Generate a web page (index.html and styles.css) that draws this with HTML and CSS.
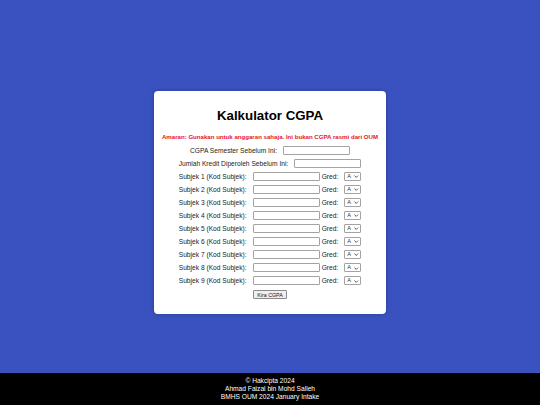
FILE: index.html
```html
<!DOCTYPE html>
<html lang="ms">
<head>
<meta charset="utf-8">
<title>Kalkulator CGPA</title>
<link rel="stylesheet" href="styles.css">
</head>
<body>
<main class="stage">
  <section class="card">
    <h1 class="title">Kalkulator CGPA</h1>
    <p class="warning">Amaran: Gunakan untuk anggaran sahaja. Ini bukan CGPA rasmi dari OUM</p>
    <form class="form">
      <div class="row"><label class="lbl">CGPA Semester Sebelum Ini:</label><input class="txt" type="text"></div>
      <div class="row"><label class="lbl">Jumlah Kredit Diperoleh Sebelum Ini:</label><input class="txt" type="text"></div>
      <div class="row"><label class="lbl">Subjek 1 (Kod Subjek):</label><input class="txt" type="text"><label class="gred">Gred:</label><span class="selwrap"><select class="sel"><option>A</option></select><svg class="chev" viewBox="0 0 6 4"><path d="M0.6 0.8 L3 3.2 L5.4 0.8" fill="none" stroke="#333" stroke-width="1.1"/></svg></span></div>
      <div class="row"><label class="lbl">Subjek 2 (Kod Subjek):</label><input class="txt" type="text"><label class="gred">Gred:</label><span class="selwrap"><select class="sel"><option>A</option></select><svg class="chev" viewBox="0 0 6 4"><path d="M0.6 0.8 L3 3.2 L5.4 0.8" fill="none" stroke="#333" stroke-width="1.1"/></svg></span></div>
      <div class="row"><label class="lbl">Subjek 3 (Kod Subjek):</label><input class="txt" type="text"><label class="gred">Gred:</label><span class="selwrap"><select class="sel"><option>A</option></select><svg class="chev" viewBox="0 0 6 4"><path d="M0.6 0.8 L3 3.2 L5.4 0.8" fill="none" stroke="#333" stroke-width="1.1"/></svg></span></div>
      <div class="row"><label class="lbl">Subjek 4 (Kod Subjek):</label><input class="txt" type="text"><label class="gred">Gred:</label><span class="selwrap"><select class="sel"><option>A</option></select><svg class="chev" viewBox="0 0 6 4"><path d="M0.6 0.8 L3 3.2 L5.4 0.8" fill="none" stroke="#333" stroke-width="1.1"/></svg></span></div>
      <div class="row"><label class="lbl">Subjek 5 (Kod Subjek):</label><input class="txt" type="text"><label class="gred">Gred:</label><span class="selwrap"><select class="sel"><option>A</option></select><svg class="chev" viewBox="0 0 6 4"><path d="M0.6 0.8 L3 3.2 L5.4 0.8" fill="none" stroke="#333" stroke-width="1.1"/></svg></span></div>
      <div class="row"><label class="lbl">Subjek 6 (Kod Subjek):</label><input class="txt" type="text"><label class="gred">Gred:</label><span class="selwrap"><select class="sel"><option>A</option></select><svg class="chev" viewBox="0 0 6 4"><path d="M0.6 0.8 L3 3.2 L5.4 0.8" fill="none" stroke="#333" stroke-width="1.1"/></svg></span></div>
      <div class="row"><label class="lbl">Subjek 7 (Kod Subjek):</label><input class="txt" type="text"><label class="gred">Gred:</label><span class="selwrap"><select class="sel"><option>A</option></select><svg class="chev" viewBox="0 0 6 4"><path d="M0.6 0.8 L3 3.2 L5.4 0.8" fill="none" stroke="#333" stroke-width="1.1"/></svg></span></div>
      <div class="row"><label class="lbl">Subjek 8 (Kod Subjek):</label><input class="txt" type="text"><label class="gred">Gred:</label><span class="selwrap"><select class="sel"><option>A</option></select><svg class="chev" viewBox="0 0 6 4"><path d="M0.6 0.8 L3 3.2 L5.4 0.8" fill="none" stroke="#333" stroke-width="1.1"/></svg></span></div>
      <div class="row"><label class="lbl">Subjek 9 (Kod Subjek):</label><input class="txt" type="text"><label class="gred">Gred:</label><span class="selwrap"><select class="sel"><option>A</option></select><svg class="chev" viewBox="0 0 6 4"><path d="M0.6 0.8 L3 3.2 L5.4 0.8" fill="none" stroke="#333" stroke-width="1.1"/></svg></span></div>
      <div class="row btnrow"><button class="btn" type="button">Kira CGPA</button></div>
    </form>
  </section>
</main>
<footer class="footer">
  <div>© Hakcipta 2024</div>
  <div>Ahmad Faizal bin Mohd Salleh</div>
  <div>BMHS OUM 2024 January Intake</div>
</footer>
</body>
</html>
```
FILE: styles.css
```css
html, body {
  margin: 0;
  padding: 0;
}
body {
  background: #3a52c0;
  font-family: "Liberation Sans", Arial, sans-serif;
  font-size: 6.65px;
  color: #000;
  height: 405px;
}
.stage {
  height: 405px;
  display: flex;
  align-items: center;
  justify-content: center;
}
.card {
  width: 232px;
  height: 223px;
  box-sizing: border-box;
  background: #fff;
  border-radius: 4px;
  box-shadow: 0 0 4px rgba(0, 0, 0, 0.25);
  padding: 17px 0 0;
  text-align: center;
}
.title {
  margin: 0;
  font-size: 13.3px;
  font-weight: bold;
  line-height: 15.3px;
}
.warning {
  margin: 9.5px 0 0;
  color: #e8141c;
  font-weight: bold;
  line-height: 7.6px;
  white-space: nowrap;
  font-size: 6.1px;
}
.form {
  margin-top: 5.5px;
  display: flex;
  flex-direction: column;
  gap: 4.05px;
}
.row {
  display: flex;
  justify-content: center;
  align-items: center;
  height: 9px;
}
.lbl {
  margin-right: 6px;
  color: #222;
}
.gred {
  margin-left: 2px;
  margin-right: 6px;
  color: #222;
}
.txt {
  width: 67px;
  height: 9px;
  box-sizing: border-box;
  border: 1px solid #a3a3a3;
  border-radius: 1px;
  padding: 0 2px;
  font-size: 6.65px;
  font-family: inherit;
  background: #fff;
}
.selwrap {
  position: relative;
  display: inline-block;
  width: 17px;
  height: 9px;
}
.sel {
  -webkit-appearance: none;
  appearance: none;
  display: block;
  width: 17px;
  height: 9px;
  box-sizing: border-box;
  font-size: 5.6px;
  font-family: inherit;
  padding: 0 0 0 2px;
  border: 1px solid #a3a3a3;
  border-radius: 1px;
  background: #fff;
  color: #333;
  line-height: 7px;
}
.chev {
  position: absolute;
  right: 2.5px;
  top: 3.2px;
  width: 4.5px;
  height: 3px;
  pointer-events: none;
}
.btnrow {
  margin-top: 1px;
}
.btn {
  height: 9px;
  width: 34px;
  box-sizing: border-box;
  padding: 0;
  font-size: 5.3px;
  font-family: inherit;
  border: 1px solid #8a8a8a;
  border-radius: 1px;
  background: #efefef;
  color: #111;
}
.footer {
  position: fixed;
  left: 0;
  right: 0;
  bottom: 0;
  background: #000;
  color: #fff;
  text-align: center;
  padding: 4.5px 0;
  line-height: 7.7px;
}
```
